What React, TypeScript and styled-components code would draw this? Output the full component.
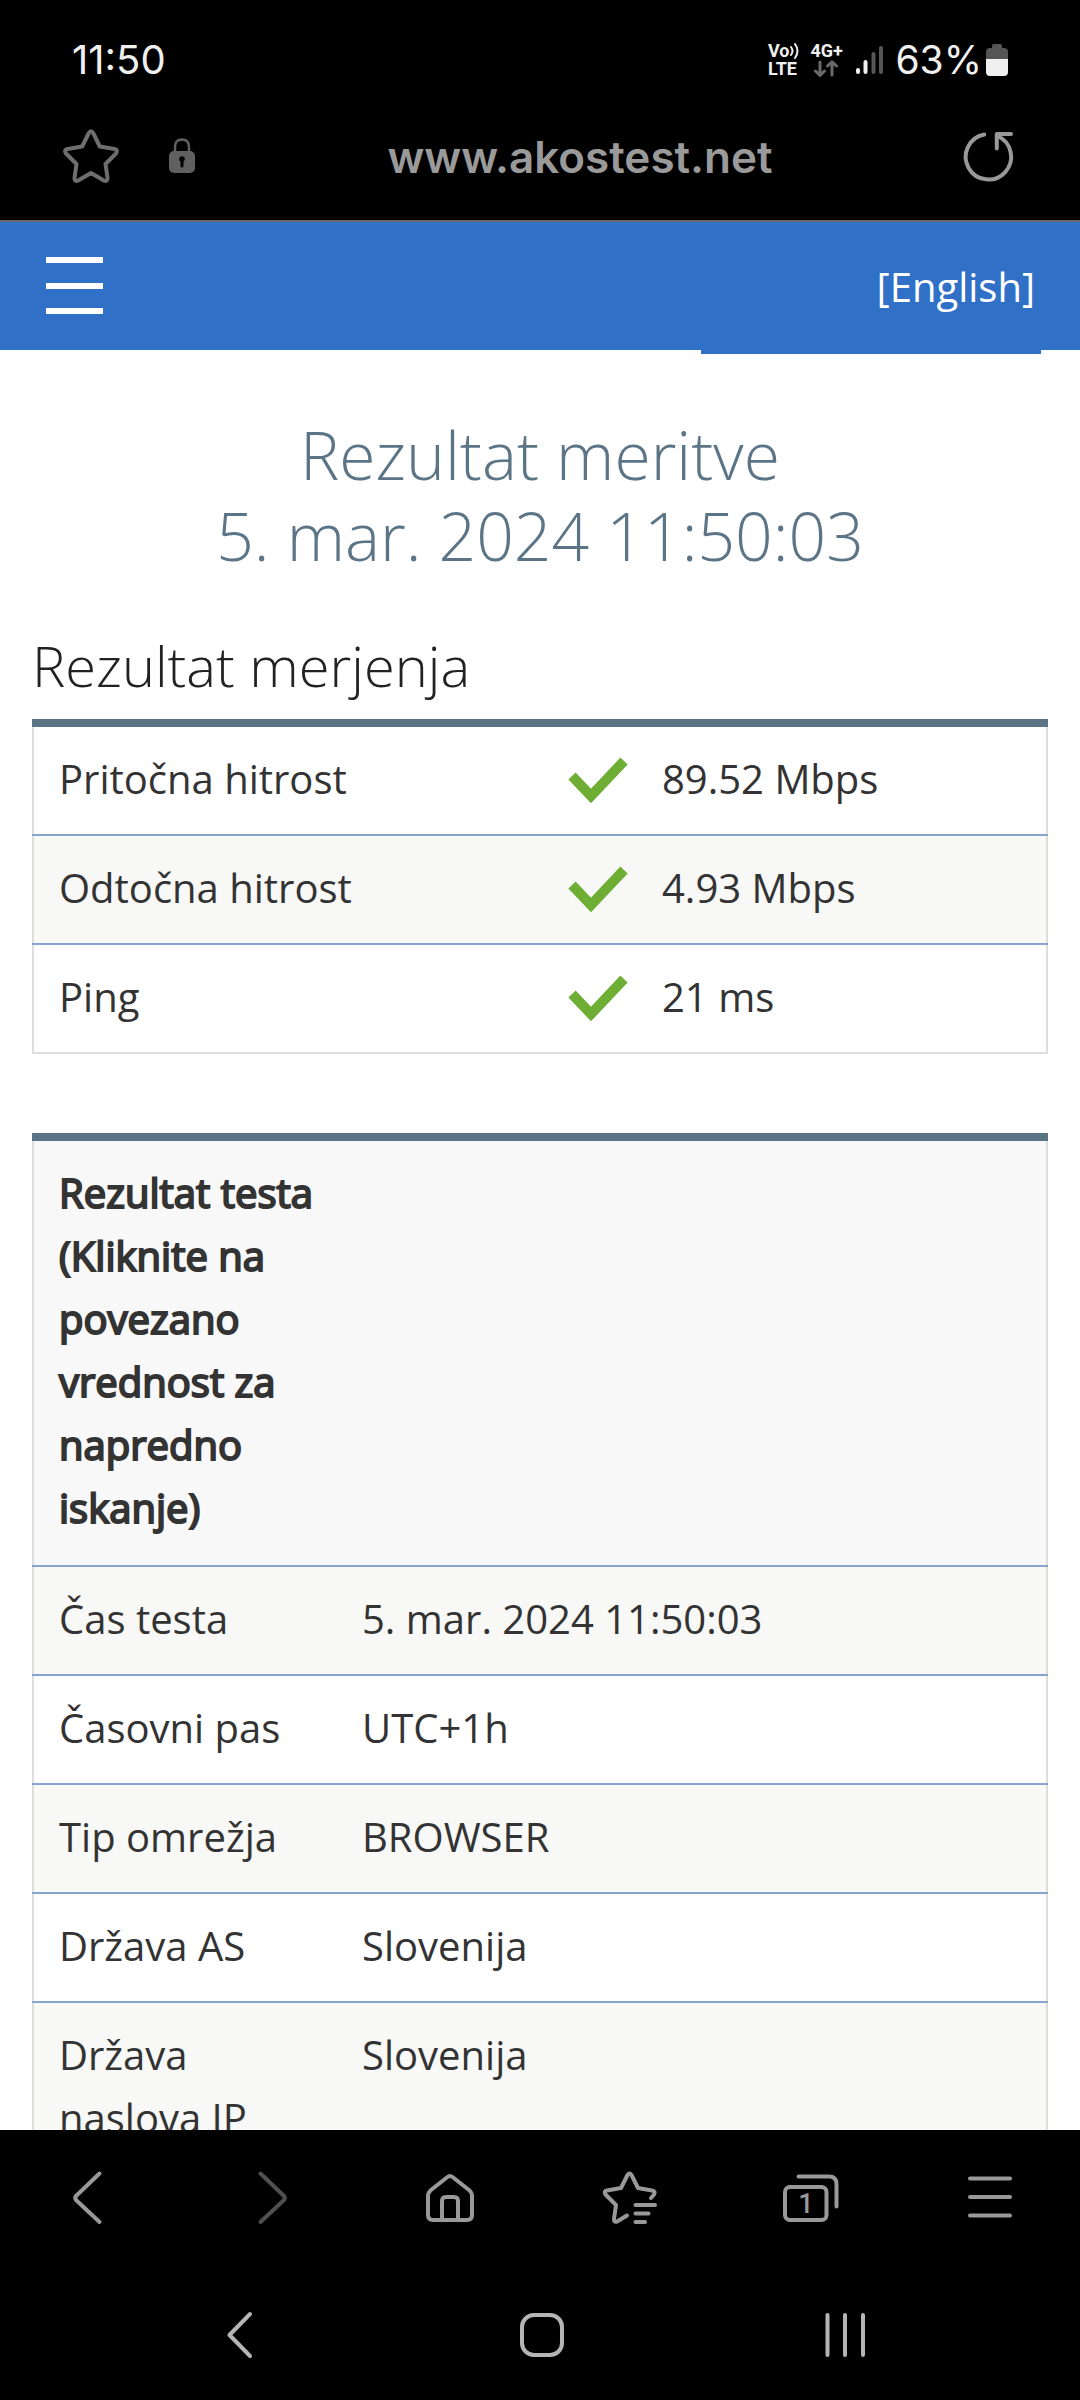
import React from 'react';
import styled, { createGlobalStyle } from 'styled-components';

const sans = '"Open Sans", "Noto Sans", sans-serif';
const system = 'Inter, Roboto, sans-serif';

const GlobalStyle = createGlobalStyle`
  *, *::before, *::after { box-sizing: border-box; }
  body { margin: 0; background: #000; }
`;

const Screen = styled.div`
  display: flex;
  flex-direction: column;
  height: 100vh;
  overflow: hidden;
  background: #000;
  font-family: ${sans};
`;

const StatusBar = styled.div`
  display: flex;
  align-items: center;
  justify-content: space-between;
  flex: none;
  height: 92px;
  padding: 28px 72px 0;
  color: #f0f0f0;
  font-family: ${system};
  font-size: 40px;
  line-height: 46px;
`;

const StatusIcons = styled.div`
  display: flex;
  align-items: center;
`;

const BatteryLevel = styled.span`
  font-size: 39px;
`;

const NetworkLabel = styled.div`
  display: flex;
  flex-direction: column;
  margin-right: 11px;
  font: 700 18px/18px Roboto, sans-serif;

  span { display: flex; align-items: center; }
`;

const Signal = styled.svg`
  margin-right: 12px;
`;

const Battery = styled.svg`
  margin-left: 4px;
`;

const AddressBar = styled.header`
  display: flex;
  align-items: center;
  flex: none;
  height: 128px;
  padding: 0 61px;
`;

const IconButton = styled.button<{ $color?: string }>`
  display: flex;
  align-items: center;
  justify-content: center;
  min-width: 60px;
  height: 60px;
  padding: 0;
  border: 0;
  background: none;
  color: ${(p) => p.$color ?? '#999'};

  svg {
    fill: none;
    stroke: currentColor;
    stroke-width: 4;
    stroke-linecap: round;
    stroke-linejoin: round;
  }
`;

const Lock = styled.svg`
  flex: none;
  margin-left: 48px;
`;

const Url = styled.button`
  flex: 1;
  padding: 2px 0 0 6px;
  border: 0;
  background: none;
  color: #9a9a9a;
  font: 600 44px/56px ${system};
`;

const Page = styled.main`
  flex: 1;
  min-height: 0;
  overflow: hidden;
  border-top: 2px solid #6b6b6b;
  background: #fff;
  color: #333;
`;

const SiteHeader = styled.div`
  display: flex;
  align-items: flex-start;
  justify-content: space-between;
  height: 128px;
  padding: 0 39px 0 45px;
  background: #3170c7;
`;

const MenuButton = styled(IconButton)`
  height: 128px;
  color: #fff;

  svg {
    stroke-width: 6;
    stroke-linecap: butt;
  }
`;

const LanguageLink = styled.a`
  width: 340px;
  height: 132px;
  padding: 33px 6px 0;
  background: #3170c7;
  color: #fff;
  font-size: 40px;
  line-height: 63px;
  text-align: right;
  text-decoration: none;
`;

const Content = styled.div`
  padding: 64px 32px 0;
`;

const Title = styled.h1`
  margin: 0;
  color: #5b7587;
  font-size: 66px;
  font-weight: 300;
  line-height: 81px;
  text-align: center;
`;

const Subtitle = styled.h2`
  margin: 55px 0 20px;
  color: #222;
  font-size: 56px;
  font-weight: 300;
  line-height: 68px;
`;

const Table = styled.table`
  width: 100%;
  margin-bottom: 79px;
  border: 2px solid #ddd;
  border-top: 8px solid #5b7587;
  border-collapse: collapse;
  table-layout: fixed;
  font-size: 40px;
  line-height: 63px;

  tbody tr:nth-child(even) { background: #f8f8f6; }
  tr + tr, thead + tbody tr { border-top: 2px solid #87a4d0; }
`;

const DetailTable = styled(Table)`
  tbody tr:nth-child(even) { background: #fff; }
  tbody tr:nth-child(odd) { background: #f8f8f6; }
  thead { background: #f8f8f8; }
`;

const Cell = styled.td`
  padding: 20px 25px 24px;
  vertical-align: top;
`;

const RowHead = styled.th`
  padding: 20px 16px 24px 25px;
  font-weight: 400;
  text-align: left;
  vertical-align: top;
`;

const ColumnHead = styled(RowHead)`
  padding-bottom: 26px;
  -webkit-text-stroke: 2px #333;
`;

const Value = styled.span`
  display: flex;
  align-items: center;
  gap: 34px;
  padding-left: 3px;
`;

const Toolbar = styled.nav`
  display: grid;
  grid-template-columns: repeat(6, 1fr);
  align-items: center;
  flex: none;
  height: 136px;
`;

const SystemNav = styled.nav`
  display: grid;
  grid-template-columns: repeat(3, 1fr);
  align-items: center;
  flex: none;
  height: 134px;
  padding: 4px 84px 0 88px;
`;

const Icon = ({ children }: { children: React.ReactNode }) => (
  <svg width="60" height="60" viewBox="0 0 60 60" aria-hidden="true">{children}</svg>
);

const Check = () => (
  <svg width="60" height="48" viewBox="0 0 60 48" role="img" aria-label="OK">
    <path d="M4 21 L23 41 L56 6" fill="none" stroke="#6fae34" strokeWidth="10" />
  </svg>
);

const measurements = [
  ['Pritočna hitrost', '89.52 Mbps'],
  ['Odtočna hitrost', '4.93 Mbps'],
  ['Ping', '21 ms'],
];

const details = [
  ['Čas testa', '5. mar. 2024 11:50:03'],
  ['Časovni pas', 'UTC+1h'],
  ['Tip omrežja', 'BROWSER'],
  ['Država AS', 'Slovenija'],
  ['Država naslova IP', 'Slovenija'],
];

export default function App() {
  return (
    <Screen>
      <GlobalStyle />
      <StatusBar>
        <span>11:50</span>
        <StatusIcons>
          <NetworkLabel>
            <span>
              Vo
              <svg width="10" height="18" viewBox="0 0 10 18" fill="none" stroke="#f0f0f0" strokeWidth="2" strokeLinecap="round">
                <path d="M2 5 Q5 9 2 13 M6 2 Q11 9 6 16" />
              </svg>
            </span>
            <span>LTE</span>
          </NetworkLabel>
          <NetworkLabel>
            <span>4G+</span>
            <svg width="34" height="18" viewBox="0 0 34 18" fill="none" stroke="#6a6a6a" strokeWidth="3" strokeLinecap="round" strokeLinejoin="round">
              <path d="M10 2 V15 M5.500 11 L10 15.500 L14.500 11 M22 15 V2 M17.500 6 L22 1.800 L26.500 6" />
            </svg>
          </NetworkLabel>
          <Signal width="28" height="30" viewBox="0 0 28 30" strokeWidth="4" strokeLinecap="round">
            <path d="M3 25 V27 M10.500 17 V27" stroke="#f0f0f0" />
            <path d="M18.500 9 V27 M26 3 V27" stroke="#555" />
          </Signal>
          <BatteryLevel>63%</BatteryLevel>
          <Battery width="22" height="32" viewBox="0 0 22 32">
            <path d="M6 2 Q6 0 8 0 H14 Q16 0 16 2 V4 H18 Q22 4 22 8 V16 H0 V8 Q0 4 4 4 H6 Z" fill="#555" />
            <path d="M0 15 H22 V28 Q22 32 18 32 H4 Q0 32 0 28 Z" fill="#f0f0f0" />
          </Battery>
        </StatusIcons>
      </StatusBar>

      <AddressBar>
        <IconButton type="button" aria-label="Bookmark" $color="#6e6e6e">
          <Icon>
            <path d="M27.800 7 Q30 3.500 32.200 7 L38.800 20.500 L53.500 23 Q57.500 24 55 27.500 L44.500 38 L46.500 52 Q46.500 56 42.800 54.500 L30 47 L17.200 54.500 Q13.500 56 13.500 52 L15.500 38 L5 27.500 Q2.500 24 6.500 23 L21.200 20.500 Z" />
          </Icon>
        </IconButton>
        <Lock width="26" height="36" viewBox="0 0 26 36">
          <path d="M6 15 V9 Q6 1.500 13 1.500 Q20 1.500 20 9 V15" fill="none" stroke="#606060" strokeWidth="2.500" />
          <rect y="13" width="26" height="22" rx="5" fill="#606060" />
          <circle cx="13" cy="21" r="2.800" fill="#000" />
          <path d="M13 21 V28" stroke="#000" strokeWidth="3" strokeLinecap="round" />
        </Lock>
        <Url type="button">www.akostest.net</Url>
        <IconButton type="button" aria-label="Reload">
          <Icon>
            <path d="M25.200 8.500 A22.700 22.700 0 1 0 38.500 10" />
            <path d="M37.800 22.500 V8 H52" />
          </Icon>
        </IconButton>
      </AddressBar>

      <Page>
        <SiteHeader>
          <MenuButton type="button" aria-label="Menu">
            <svg width="60" height="60" viewBox="0 0 60 60">
              <path d="M1 4 H58 M1 30 H58 M1 55 H58" />
            </svg>
          </MenuButton>
          <LanguageLink href="#english">[English]</LanguageLink>
        </SiteHeader>

        <Content>
          <Title>Rezultat meritve<br />5. mar. 2024 11:50:03</Title>
          <Subtitle>Rezultat merjenja</Subtitle>
          <Table>
            <tbody>
              {measurements.map(([label, value]) => (
                <tr key={label}>
                  <RowHead scope="row">{label}</RowHead>
                  <Cell><Value><Check />{value}</Value></Cell>
                </tr>
              ))}
            </tbody>
          </Table>

          <DetailTable>
            <colgroup>
              <col width="304" />
              <col />
            </colgroup>
            <thead>
              <tr>
                <ColumnHead scope="col">Rezultat testa (Kliknite na povezano vrednost za napredno iskanje)</ColumnHead>
                <Cell />
              </tr>
            </thead>
            <tbody>
              {details.map(([label, value]) => (
                <tr key={label}>
                  <RowHead scope="row">{label}</RowHead>
                  <Cell>{value}</Cell>
                </tr>
              ))}
            </tbody>
          </DetailTable>
        </Content>
      </Page>

      <Toolbar>
        <IconButton type="button" aria-label="Back">
          <Icon><path d="M39.500 5.500 L16 28 Q14.500 30 16 32 L39.500 54" /></Icon>
        </IconButton>
        <IconButton type="button" aria-label="Forward" $color="#505050">
          <Icon><path d="M20.500 5.500 L44 28 Q45.500 30 44 32 L20.500 54" /></Icon>
        </IconButton>
        <IconButton type="button" aria-label="Home">
          <Icon>
            <path d="M27.500 9 Q30 7 32.500 9 L49 22 Q52 24.500 52 28 V47 Q52 52 47 52 H13 Q8 52 8 47 V28 Q8 24.500 11 22 Z" />
            <path d="M22 52 V33 Q22 29 26 29 H34 Q38 29 38 33 V52" />
          </Icon>
        </IconButton>
        <IconButton type="button" aria-label="Bookmarks">
          <Icon>
            <path d="M27 47.500 L17 53.500 Q13.800 54.500 14 51 L16 37 L5.500 26.500 Q3.500 23 7 22.500 L21 20 L27.500 7 Q29.500 4 31.500 7 L38 20 L52 22.500 Q56 23.500 54 26.500 L51 30" />
            <path d="M35.500 37 H55 M35.500 45.500 H48.500 M35.500 54 H45" />
          </Icon>
        </IconButton>
        <IconButton type="button" aria-label="Tabs">
          <Icon>
            <rect x="5" y="19" width="41.500" height="33" rx="5" />
            <path d="M18.500 8.500 H49 Q56.500 8.500 56.500 16 V38.500" />
            <text x="26" y="45" textAnchor="middle" fontFamily="Roboto, sans-serif" fontSize="27" fontWeight="500" fill="#999" stroke="none">1</text>
          </Icon>
        </IconButton>
        <IconButton type="button" aria-label="Menu">
          <Icon><path d="M10 10.500 H50 M10 29 H50 M10 47.500 H50" /></Icon>
        </IconButton>
      </Toolbar>

      <SystemNav>
        <IconButton type="button" aria-label="System back" $color="#b5b5b5">
          <Icon><path d="M41 9 L20.500 30 L41 51" /></Icon>
        </IconButton>
        <IconButton type="button" aria-label="System home" $color="#b5b5b5">
          <Icon><rect x="10" y="10" width="40" height="40" rx="12" /></Icon>
        </IconButton>
        <IconButton type="button" aria-label="Recent apps" $color="#b5b5b5">
          <Icon><path d="M12.500 10 V50 M30 10 V50 M48 10 V50" /></Icon>
        </IconButton>
      </SystemNav>
    </Screen>
  );
}
